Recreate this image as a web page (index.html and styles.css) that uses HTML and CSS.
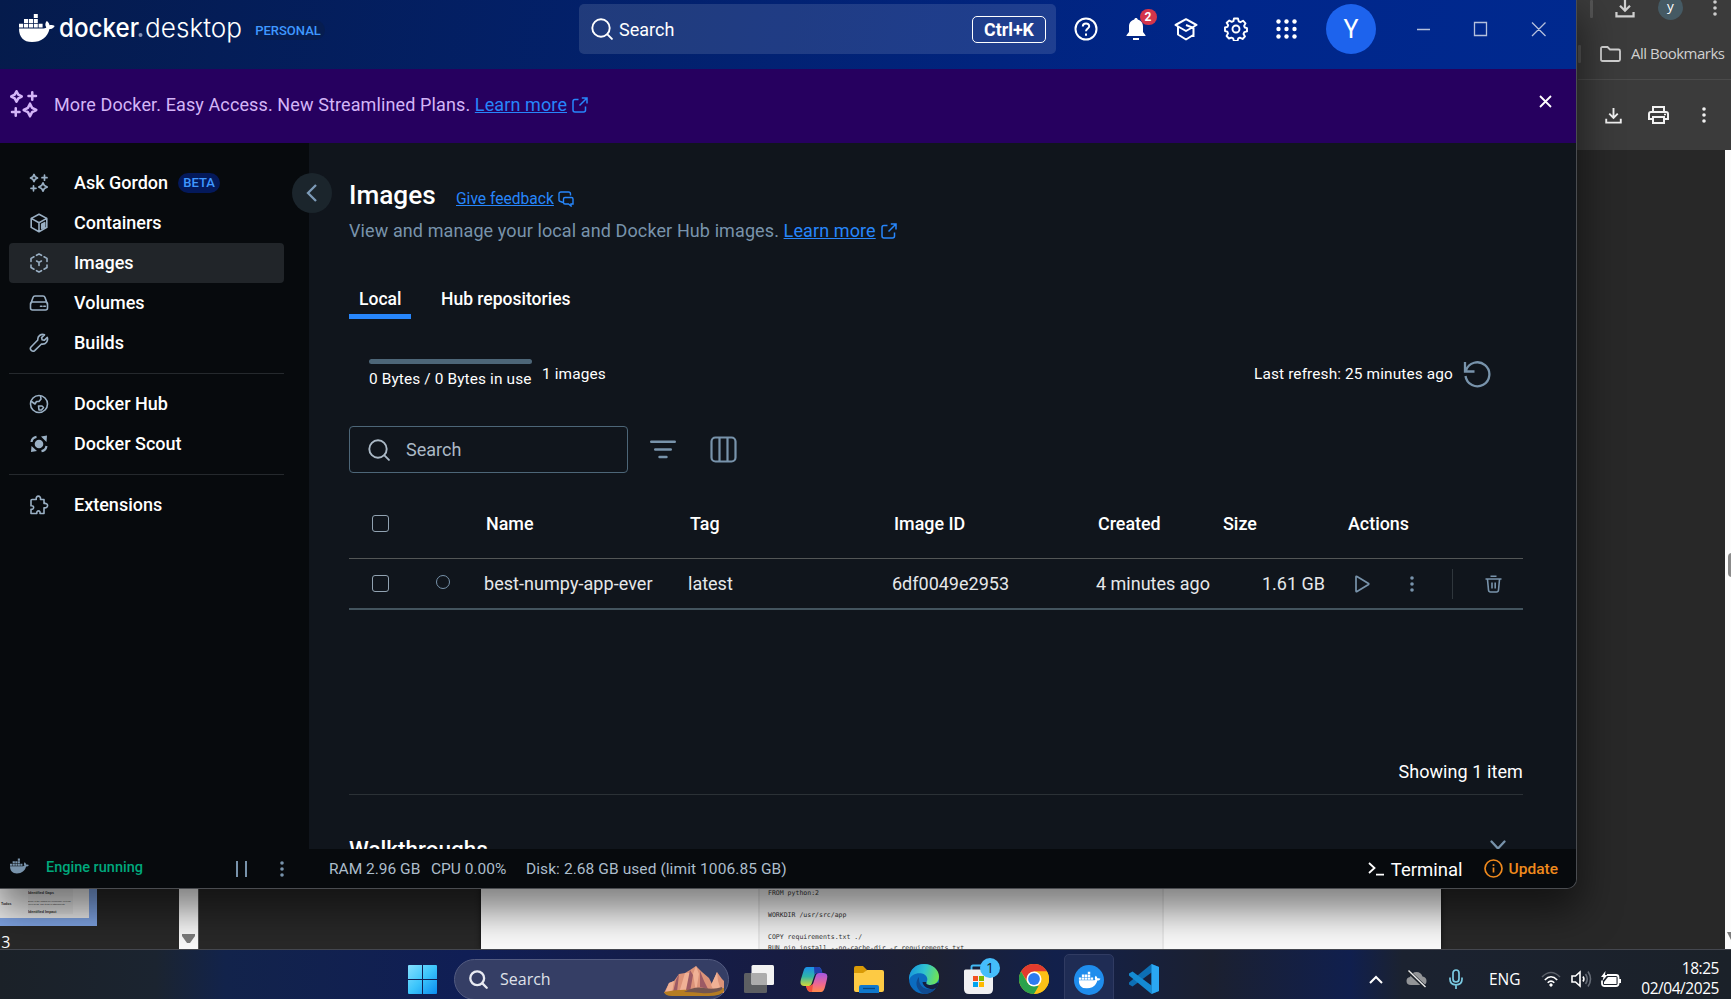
FILE: index.html
```html
<!DOCTYPE html>
<html lang="en">
<head>
<meta charset="utf-8">
<title>Docker Desktop</title>
<link rel="stylesheet" href="styles.css">
</head>
<body>
<svg class="defs" width="0" height="0">
  <symbol id="whale" viewBox="0 0 36 28"><path d="M0 9.8h4.2v3.8H0zM5 9.8h4.2v3.8H5zM10 9.8h4v3.8h-4zM14.8 9.8h4v3.8h-4zM19.6 9.8h4v3.8h-4zM5 5h4.2v4H5zM10 5h4v4h-4zM14.8 5h4v4h-4zM14.8 0h4v4h-4z"/><path d="M0 14.4h24.6c1.8 0 2.7-.5 2.6-1.2-1.3-2-1-4.400.5-6.300 1.700 1 2.700 2.700 2.800 4.300 1.900-.5 4-.2 5.200.7-.9 2.100-2.800 3.100-5.200 3.100C28.400 23.300 22.500 28 13 28 4.500 28 0 23 0 14.400z"/></symbol>
  <symbol id="sparkles" viewBox="0 0 20 20"><g fill="none" stroke="currentColor" stroke-width="1.7" stroke-linejoin="round" stroke-linecap="round"><path d="M5 1.500 6.200 3.800 8.500 5 6.200 6.200 5 8.500 3.800 6.200 1.500 5 3.800 3.800zM14 9.800l1.400 2.800 2.800 1.400-2.800 1.400-1.400 2.800-1.400-2.800L9.800 14l2.800-1.400zM15.500 2.200v5M13 4.700h5M4.500 12.800v5M2 15.300h5"/></g></symbol>
  <symbol id="search" viewBox="0 0 22 22"><g fill="none" stroke="currentColor" stroke-width="1.900" stroke-linecap="round"><circle cx="10" cy="10" r="8.700"/><path d="m16.400 16.400 4.500 4.500"/></g></symbol>
  <symbol id="external" viewBox="0 0 16 16"><g fill="none" stroke="currentColor" stroke-width="1.500"><path d="M6.500 2.500H3Q1 2.500 1 4.500V13q0 2 2 2h8.500q2 0 2-2V9.500M7.500 8.500 15 1M9.800 1H15v5.500"/></g></symbol>
  <symbol id="dots" viewBox="0 0 4 16"><circle cx="2" cy="2" r="1.800"/><circle cx="2" cy="8" r="1.800"/><circle cx="2" cy="14" r="1.800"/></symbol>
  <symbol id="download" viewBox="0 0 18 18"><path d="M9 1v10M4.500 7 9 11.500 13.500 7M1.300 12.500V16.500H16.700V12.500" fill="none" stroke="currentColor" stroke-width="2"/></symbol>
</svg>

<div class="desktop">
  <div class="browser">
    <div class="browser-top">
      <div class="chrome-row row-tools">
        <i class="vbar"></i>
        <svg class="dl" width="22" height="20"><use href="#download"/></svg>
        <span class="mini-avatar">y</span>
        <svg class="kebab" width="4" height="16"><use href="#dots"/></svg>
      </div>
      <div class="chrome-row row-bookmarks">
        <i class="vbar"></i>
        <svg width="21" height="16" viewBox="0 0 21 16" fill="none" stroke="currentColor" stroke-width="1.800"><path d="M1 2.500Q1 1 2.500 1H7.500L10 3.500h8.500q1.500 0 1.500 1.500v8.500q0 1.500-1.500 1.500h-16Q1 15 1 13.500z"/></svg>
        <span>All Bookmarks</span>
      </div>
      <div class="chrome-row row-pdf">
        <svg class="pdf-dl" width="17" height="17"><use href="#download"/></svg>
        <svg width="21" height="18" viewBox="0 0 21 18" fill="none" stroke="currentColor" stroke-width="2"><path d="M5 5V1h11v4M5 13H1V8q0-2 2-2h15q2 0 2 2v5h-4M5 11h11v6H5z"/><path d="M16 8.500h2" stroke-width="1.500"/></svg>
        <svg class="kebab" width="4" height="16"><use href="#dots"/></svg>
      </div>
    </div>
    <div class="viewer">
      <div class="thumbs">
        <div class="thumb"><div class="thumb-page">
          <b class="tl side">Todos</b>
          <div class="thumb-col"><span>and the rest</span><b>Identified Gaps</b><span>Some of the images we a summary of items<br>open areas, and items of attachments</span><b>Identified Impact</b></div>
        </div></div>
        <span class="thumb-no">13</span>
      </div>
      <div class="thumb-scroll"><svg width="13" height="9"><path d="M0 0h13v2L8 9H5L0 2z" fill="#7b7b7b"/></svg></div>
      <div class="gutter"></div>
      <div class="paper"><pre class="code">FROM python:2

WORKDIR /usr/src/app

COPY requirements.txt ./
RUN pip install --no-cache-dir -r requirements.txt</pre></div>
      <div class="grow"></div>
      <div class="page-scroll"><i class="thumb-grip"></i><svg width="6" height="8"><path d="M2 0h4v8z" fill="#7b7b7b"/></svg></div>
    </div>
  </div>

  <div class="window">
    <header class="titlebar">
      <svg class="logo" width="36" height="28" fill="#fff"><use href="#whale"/></svg>
      <svg class="wordmark" width="184" height="34" viewBox="0 0 184 34" fill="#fff">
        <text x="0" y="24" class="wm-bold" textLength="80" lengthAdjust="spacingAndGlyphs">docker</text>
        <circle cx="81.500" cy="22" r="2" fill="#8391b5"/>
        <text x="86" y="24" class="wm-light" textLength="97" lengthAdjust="spacingAndGlyphs">desktop</text>
      </svg>
      <span class="pill personal">PERSONAL</span>
      <div class="top-search"><svg width="22" height="22"><use href="#search"/></svg><span>Search</span><kbd>Ctrl+K</kbd></div>
      <div class="top-icons">
        <svg width="24" height="24" viewBox="0 0 24 24" fill="none" stroke="#fff" stroke-width="2"><circle cx="12" cy="12" r="10.500"/><path d="M8.800 9.500c0-4 6.400-4 6.400-.3 0 2.200-3.200 2.300-3.200 5"/><path d="M12 16.500v2.200"/></svg>
        <span class="bell"><svg width="22" height="24" viewBox="0 0 22 24" fill="#fff"><path d="M11 1c.9 0 1.500.5 1.700 1.500 3.300.8 5.300 3.500 5.300 7V15l2.500 3.200V19h-19v-.8L4 15V9.500c0-3.500 2-6.200 5.300-7C9.500 1.500 10.100 1 11 1zM8 21h6v2H8z"/></svg><b>2</b></span>
        <svg width="24" height="24" viewBox="0 0 24 24" fill="none" stroke="#fff" stroke-width="2" stroke-linejoin="round"><path d="M12 2.200 22.500 8 12 14 1.500 8zM4 9.500v8l8 5 8-5M12 8l7.500 3v9"/></svg>
        <svg width="24" height="24" viewBox="0 0 24 24" fill="none" stroke="#fff" stroke-width="1.900" stroke-linejoin="round"><circle cx="12" cy="12" r="3.500"/><path d="M10 1.500h4l.7 2.900 1.700.8 2.600-1.500 2.500 2.600-1.400 2.600.7 1.600 2.200.6v3.300l-2.700.8-.8 1.800 1.500 2.400-2.400 2.600-2.700-1.400-1.600.7-.8 2.700h-3.600l-.8-2.700-1.800-.7L5 21.500 2.600 19l1.400-2.600-.7-1.700L1 14.100v-3.600l2.500-.7.7-1.600L2.700 5.800 5.300 3.500l2.400 1.400 1.700-.7z"/></svg>
        <svg width="24" height="24" viewBox="0 0 24 24" fill="#fff"><g id="d3"><circle cx="4.500" cy="4.500" r="2.200"/><circle cx="12.500" cy="4.500" r="2.200"/><circle cx="20.500" cy="4.500" r="2.200"/></g><use href="#d3" y="7.500"/><use href="#d3" y="15"/></svg>
      </div>
      <span class="avatar">Y</span>
      <svg class="win-controls" width="130" height="16" viewBox="0 0 130 16" fill="none" stroke="#b5c0dc" stroke-width="1.300"><path d="M0 8.500h13M57.500 1.500h12v13h-12zM115 1.500l13.500 13.500M128.500 1.500 115 15"/></svg>
    </header>

    <div class="banner">
      <svg class="b-spark" width="30" height="30"><use href="#sparkles"/></svg>
      <p>More Docker. Easy Access. New Streamlined Plans. <a>Learn more</a></p>
      <svg class="b-ext" width="16" height="16"><use href="#external"/></svg>
      <svg class="b-close" width="13" height="13" viewBox="0 0 13 13"><path d="M1 1l11 11M12 1 1 12" stroke="#fff" stroke-width="1.800"/></svg>
    </div>

    <div class="body">
      <nav class="sidebar">
        <a class="item"><svg width="20" height="20"><use href="#sparkles"/></svg><span>Ask Gordon</span><span class="pill beta">BETA</span></a>
        <a class="item"><svg width="20" height="20" viewBox="0 0 20 20" class="ln"><path d="M10 1.200l7.800 4.200v9L10 18.700l-7.800-4.300v-9zM2.200 5.400 10 9.700l7.800-4.300M10 9.700v9M12.700 15.300v-4l3-1.600v4zM14.200 11v3.500"/></svg><span>Containers</span></a>
        <a class="item active"><svg width="20" height="20" viewBox="0 0 20 20" class="ln" stroke-width="1.900"><path d="M7.500 2.300 10 1l2.500 1.300M15 3.800l3 1.600v3M18 12v2.500l-3 1.700M12.500 17.700 10 19l-2.500-1.300M5 16.200l-3-1.700V12M2 8.400v-3l3-1.600M7.600 8 10 9.400 12.400 8M10 9.400V12.500"/></svg><span>Images</span></a>
        <a class="item"><svg width="20" height="20" viewBox="0 0 20 20" class="ln"><path d="M1.500 11.500 4 4.500Q4.500 3 6 3h8q1.500 0 2 1.500l2.500 7M3.500 9h13q2 0 2 2v4q0 2-2 2h-13q-2 0-2-2v-4q0-2 2-2z"/><path d="M11.500 13.300h1.500M14.800 13.300h1.500"/></svg><span>Volumes</span></a>
        <a class="item"><svg width="20" height="20" viewBox="0 0 20 20" class="ln"><path d="M15.500 1.800c-3-1.300-7.200.8-6.700 5.200L2 14c-2 2.300 1.500 5.500 3.700 3.600L12.500 11c4.500.7 6.900-3.400 5.800-6.600l-3.100 2.900-2.100-.6-.5-2.100z"/></svg><span>Builds</span></a>
        <hr>
        <a class="item"><svg width="20" height="20" viewBox="0 0 20 20" class="ln"><circle cx="10" cy="10" r="8.500"/><path d="M2.500 7.500 6 10l1.500-2.500H10L12 5l-.5-3.300M9.500 12h3.500l1.500 1.500-2 2.500H10z"/></svg><span>Docker Hub</span></a>
        <a class="item"><svg width="20" height="20" viewBox="0 0 20 20"><circle cx="10" cy="10" r="4.300" fill="currentColor"/><path d="M2.500 8Q3 3.500 7.500 2.800M17.500 12q-.8 4.500-5 5.200" fill="none" stroke="currentColor" stroke-width="2.200"/><path d="M12 2.500 18 1.500 17.500 8zM2 18l.5-6 5.500 5z" fill="currentColor"/></svg><span>Docker Scout</span></a>
        <hr>
        <a class="item"><svg width="20" height="20" viewBox="0 0 20 20" class="ln"><path d="M7.300 4.500c-1-4.500 5-4.500 4.200 0H15v4c4.800-.8 4.800 5 0 4.300V18.500h-4c.7-3.500-3.700-3.500-3.200 0H2v-4.300c3.500.6 3.500-4 0-3.400V5.500q0-1 1-1z"/></svg><span>Extensions</span></a>
      </nav>
      <span class="collapse"><svg width="12" height="18" viewBox="0 0 12 18"><path d="M10 1 2 9l8 8" fill="none" stroke="#7d9bb8" stroke-width="2.300"/></svg></span>

      <main class="main">
        <div class="title-row"><h1>Images</h1><a class="feedback">Give feedback</a><svg width="16" height="16" viewBox="0 0 16 16" fill="none" stroke="#2786fb" stroke-width="1.400"><path d="M5 11.500 2.500 10.500Q1 10.500 1 9V3q0-2 2-2h7.500q2 0 2 2v1.500M7 6.500h6.500q1.500 0 1.500 1.500v5H13v2l-2.500-2H7q-1.500 0-1.500-1.500V8Q5.500 6.500 7 6.500z"/></svg></div>
        <div class="sub-row"><p>View and manage your local and Docker Hub images. <a>Learn more</a></p><svg width="16" height="16"><use href="#external"/></svg></div>
        <div class="tabs"><span class="tab on">Local</span><span class="tab">Hub repositories</span></div>
        <div class="usage">
          <div class="meter"><i></i><span>0 Bytes / 0 Bytes in use</span></div>
          <span class="count">1 images</span>
          <span class="refresh">Last refresh: 25 minutes ago</span>
          <svg width="28" height="28" viewBox="0 0 28 28" fill="none" stroke="#7893ab" stroke-width="2.300"><path d="M2 2v9.500h9.500M3 10.500A12 12 0 1 1 2.500 16"/></svg>
        </div>
        <div class="filters">
          <div class="field"><svg width="22" height="22"><use href="#search"/></svg><span>Search</span></div>
          <svg class="f1" width="26" height="19" viewBox="0 0 26 19"><path d="M1.200 1.800h23.600M5.200 9.500h15.600M9.500 17h7" stroke="#7893ab" stroke-width="2.400" stroke-linecap="round"/></svg>
          <svg width="27" height="27" viewBox="0 0 27 27" fill="none" stroke="#7893ab" stroke-width="2.200"><rect x="1.500" y="1.500" width="24" height="24" rx="4"/><path d="M9.500 2v23M17.500 2v23"/></svg>
        </div>
        <div class="table">
          <div class="tr th"><i class="box"></i><i></i><span>Name</span><span>Tag</span><span>Image ID</span><span>Created</span><span>Size</span><span>Actions</span></div>
          <div class="tr td"><i class="box"></i><i class="ring"></i><span class="name">best-numpy-app-ever</span><span>latest</span><span>6df0049e2953</span><span>4 minutes ago</span><span class="size">1.61 GB</span>
            <div class="actions">
              <svg width="15" height="18" viewBox="0 0 15 18"><path d="M1 2v14q0 1 1 .5L13.500 9.500q.6-.5 0-1L2 1.500Q1 1 1 2z" fill="none" stroke="#7893ab" stroke-width="1.700"/></svg>
              <svg class="a-dots" width="4" height="16" fill="#7893ab"><use href="#dots"/></svg>
              <i class="a-sep"></i>
              <svg width="17" height="18" viewBox="0 0 17 18" fill="none" stroke="#7893ab" stroke-width="1.600"><path d="M.5 4h16M5.500 1.200h6M2.500 4.500l1 10.500q.2 2 2 2h6q1.800 0 2-2l1-10.500M7 7.500v6M10.200 7.500v6"/></svg>
            </div>
          </div>
        </div>
        <div class="showing">Showing 1 item</div>
        <div class="walk"><h2>Walkthroughs</h2><svg width="16" height="11" viewBox="0 0 16 11"><path d="M1.500 1.500 8 8.500l6.500-7" fill="none" stroke="#7893ab" stroke-width="2.300" stroke-linecap="round"/></svg></div>
      </main>
    </div>

    <footer class="status">
      <svg class="s-whale" width="19" height="16" fill="#7893ab"><use href="#whale"/></svg>
      <span class="engine">Engine running</span>
      <i class="pause"></i>
      <svg class="s-dots" width="4" height="16" fill="#7893ab"><use href="#dots"/></svg>
      <span class="stat ram">RAM 2.96 GB</span><span class="stat cpu">CPU 0.00%</span><span class="stat">Disk: 2.68 GB used (limit 1006.85 GB)</span>
      <svg class="s-term" width="16" height="14" viewBox="0 0 16 14"><path d="M1 1l5.500 5L1 11M8 12.700h8" fill="none" stroke="#fff" stroke-width="1.800"/></svg>
      <span class="terminal">Terminal</span>
      <svg class="s-info" width="19" height="19" viewBox="0 0 19 19" fill="none" stroke="#f08a1d" stroke-width="1.700"><circle cx="9.500" cy="9.500" r="8.500"/><path d="M9.500 8.500v5M9.500 5.300v1.700"/></svg>
      <span class="update">Update</span>
    </footer>
  </div>

  <div class="taskbar">
    <svg class="start" width="29" height="29" viewBox="0 0 29 29"><defs><linearGradient id="win" gradientUnits="userSpaceOnUse" x1="0" y1="0" x2="29" y2="29"><stop offset="0" stop-color="#86e0ff"/><stop offset=".5" stop-color="#3cc5fb"/><stop offset="1" stop-color="#0a8cf0"/></linearGradient></defs><path d="M0 1q0-1 1-1h13v14H0zM15 0h13q1 0 1 1v13H15zM0 15h14v14H1q-1 0-1-1zM15 15h14v13q0 1-1 1H15z" fill="url(#win)"/></svg>
    <div class="task-search"><svg width="19" height="19" viewBox="0 0 22 22"><g fill="none" stroke="#e8eaf2" stroke-width="2.700" stroke-linecap="round"><circle cx="9.500" cy="9.500" r="8"/><path d="m15.500 15.500 5 5"/></g></svg><span>Search</span>
      <svg class="hills" width="60" height="30" viewBox="0 0 60 30"><path d="M0 27 5 17l5-2 5-7 6-1 5-3 6-4 6 6 7 6 3 6 5-12 5 7 5 5 2 9z" fill="#dc9379"/><path d="M5 17l5-2-2 12H1zM21 7l5 0-4 20h-7zM32 0l3 8-3 18-3-18zM53 6l1 9 3 9-8-1-2-4z" fill="#f0b195"/><path d="M15 8l-2 18-4 0 3-12zM36 5l4 10 4 8-8-2zM26 4l3 5-3 17-4-2z" fill="#9c5a64"/><path d="M0 26q15-3 27-2t33-2v3q-2 5-16 5H8Q1 30 0 26z" fill="#b57d22"/><path d="M20 26q10-6 20-4t18-1q2 3-6 5t-15 1-17-1z" fill="#73554f"/></svg></div>
    <svg class="app" width="30" height="28" viewBox="0 0 30 28"><rect y="8" width="23" height="20" rx="1.500" fill="#5d5f62"/><rect x="7.500" y="0" width="22.500" height="20" rx="1.500" fill="#f2f2f2"/><path d="M7.500 8H21.500q1.500 0 1.500 1.500V20H9q-1.500 0-1.500-1.500z" fill="#acacac"/></svg>
    <svg class="app" width="30" height="28" viewBox="0 0 30 28"><defs><linearGradient id="cp1" x1="0" y1="0" x2="0" y2="1"><stop offset="0" stop-color="#1b8eea"/><stop offset=".5" stop-color="#2fb5a8"/><stop offset="1" stop-color="#d5d737"/></linearGradient><linearGradient id="cp2" x1="0" y1="0" x2="0" y2="1"><stop offset="0" stop-color="#a257e4"/><stop offset=".6" stop-color="#f0688f"/><stop offset="1" stop-color="#ff8a4a"/></linearGradient></defs><path d="M8 2h11q2.500 0 3.500 3l.8 3H18q-2 0-2.800 3L12.500 19q-.8 2-2.500 2H5Q0 21 2 14L4.500 6Q5.500 2 8 2z" fill="url(#cp1)"/><path d="M15 2h4q2.500 0 3.500 3l.8 3H18q-2 0-2.500 2z" fill="#213fae"/><path d="M22 27H12q-3 0-4-3l-1-3h4q2.500 0 3.300-3L17 10q.7-2 3-2h4.500q5 0 3.500 6l-2 8q-1.200 5-4 5z" fill="url(#cp2)"/><path d="M7 21h4l3-2-1 8q-4 0-5-3z" fill="#f2503c"/></svg>
    <svg class="app" width="30" height="28" viewBox="0 0 30 28"><path d="M0 3q0-2 2-2h7l4 4-4 5H0z" fill="#d99a06"/><path d="M0 8h9l4-3h15q2 0 2 2v18q0 2-2 2H2q-2 0-2-2z" fill="#fdca44"/><path d="M5 28v-6q0-2 2-2h16q2 0 2 2v6z" fill="#0f78cd"/><path d="M9 23.500h12" stroke="#07477f" stroke-width="1.300"/></svg>
    <svg class="app" width="30" height="30" viewBox="0 0 30 30"><defs><linearGradient id="ed" x1="0" y1=".3" x2="1" y2=".5"><stop offset="0" stop-color="#1695dc"/><stop offset=".5" stop-color="#30c3d0"/><stop offset="1" stop-color="#70e352"/></linearGradient></defs><circle cx="15" cy="15" r="15" fill="#0b6cc0"/><path d="M0 14C1 5 7 0 15 0c9 0 15 6 15 12.500C30 18 26 21 21.500 21c-4 0-5-1.500-4-3 2-2.500.5-7.500-4.500-8.500C7 8.500 2 11 0 16z" fill="url(#ed)"/><path d="M10 15c0 8 7 12 16.500 9.500C24 28 20 30 15 30 10 28 4 20 10 13z" fill="#104b91"/><path d="M17.500 18c-1 2 .8 3 4 3 2.500 0 5-.7 7-2.400l1.500.4-2.500 5-4 1.200C18 25 14 22 13.500 18z" fill="#151f40"/></svg>
    <span class="app store"><svg width="30" height="30" viewBox="0 0 30 30"><path d="M7.500 6V3q0-1.500 1.500-1.500h12" fill="none" stroke="#42b9f5" stroke-width="1.900"/><path d="M0 7q0-1.500 1.500-1.500h26Q29 5.500 29 7v18q0 5-5 5H5q-5 0-5-5z" fill="#f0f0f2"/><path d="M9 12h5v5H9z" fill="#f25022"/><path d="M15 12h5v5h-5z" fill="#7fba00"/><path d="M9 18h5v5H9z" fill="#00a4ef"/><path d="M15 18h5v5h-5z" fill="#ffb900"/></svg><b>1</b></span>
    <svg class="app" width="30" height="30" viewBox="0 0 30 30"><circle cx="15" cy="15" r="15" fill="#fbc116"/><path d="M2 7.500A15 15 0 0 1 28 7.500H15L9 18.500z" fill="#e33b2e"/><path d="M2 7.500 8.500 18.700Q11 22 15 22h6.500L15 30A15 15 0 0 1 2 7.500z" fill="#2ba24c"/><path d="M21.500 18.700 15 30A15 15 0 0 0 28 7.500H15z" fill="#fbc116"/><circle cx="15" cy="15" r="7.500" fill="#fff"/><circle cx="15" cy="15" r="5.900" fill="#2c7bf0"/></svg>
    <span class="app running"><svg width="30" height="30" viewBox="0 0 30 30"><circle cx="15" cy="15" r="15" fill="#1f8ded"/><use href="#whale" x="4.500" y="6.500" width="22.500" height="17" fill="#fff"/></svg></span>
    <svg class="app" width="30" height="30" viewBox="0 0 30 30"><path d="M22.500 0 30 3v24l-7.500 3V8.500L3.500 22.500 0 20.500v-2z" fill="#0d6fb4"/><path d="M0 9.500 3.500 7.500 22.500 21.500V30L0 11.500z" fill="#148bd3"/><path d="M22.500 0 30 3v24l-7.500 3z" fill="#2aa7f2"/></svg>
    <div class="tray">
      <svg width="14" height="9" viewBox="0 0 14 9"><path d="M1 8l6-6 6 6" fill="none" stroke="#fff" stroke-width="2"/></svg>
      <svg class="cloud" width="21" height="18" viewBox="0 0 21 18"><path d="M5 15q-4.500 0-4.500-4Q.5 7.500 4 7q2-5 6.500-5t6 4.500q4 .5 4 4.500 0 4-4 4z" fill="#929497"/><path d="M2 1l17 16" stroke="#1b2028" stroke-width="3.500"/><path d="M2.500.5l17 16.500" stroke="#eee" stroke-width="1.400"/></svg>
      <svg class="mic" width="14" height="20" viewBox="0 0 14 20" fill="none" stroke="#7bcbe2" stroke-width="1.700"><rect x="4" y="1" width="6" height="12" rx="3"/><path d="M1 8.500v1.800q0 5.500 6 5.500t6-5.500V8.500M7 16v4"/></svg>
      <span class="lang">ENG</span>
      <svg class="wifi" width="20" height="16" viewBox="0 0 20 16" fill="none" stroke="#fff" stroke-width="1.600"><path d="M1 6q9-9 18 0" stroke="#5b6069"/><path d="M3.800 9q6.200-6.400 12.400 0M6.700 11.800q3.300-3.300 6.600 0"/><circle cx="10" cy="14" r="1.200" fill="#fff" stroke-width="1"/></svg>
      <svg class="vol" width="21" height="18" viewBox="0 0 21 18" fill="none" stroke="#fff" stroke-width="1.600"><path d="M1 6v6h3.500L9 16V2L4.500 6zM12 6.500q1.800 2.500 0 5"/><path d="M14.500 4q3.500 5 0 10M17 1.500q5 7.500 0 15" stroke="#666c76"/></svg>
      <svg class="bat" width="20" height="17" viewBox="0 0 20 17"><path d="M6 4h9q2.500 0 2.500 2.500v6Q17.500 15 15 15H3.500Q1 15 1 12.500v-3" fill="none" stroke="#fff" stroke-width="1.800"/><path d="M7 6h8.500v7H3v-2zM18 8h2v4h-2zM4.500 0 0 6h2.500L1.500 10 6.500 4H4z" fill="#fff"/></svg>
      <div class="clock"><span>18:25</span><span>02/04/2025</span></div>
    </div>
  </div>
</div>
</body>
</html>
```
FILE: styles.css
```css
* { box-sizing: border-box; margin: 0; padding: 0; }
body { width: 1731px; height: 999px; overflow: hidden; font-family: Roboto, sans-serif; font-size: 18px; color: #fff; background: #282828; }
svg { flex: none; display: block; }
a { color: #2786fb; }
.defs { position: absolute; }
.desktop { position: relative; width: 1731px; height: 999px; overflow: hidden; display: flex; flex-direction: column; }

/* Browser behind the window */
.browser { height: 949px; flex: none; display: flex; flex-direction: column; background: #282828; }
.browser-top { height: 150px; background: #3b3b3b; color: #d0d0d0; padding-left: 1578px; font-family: "Open Sans", sans-serif; }
.chrome-row { display: flex; align-items: center; }
.row-tools { height: 30px; align-items: flex-start; padding-left: 12px; }
.vbar { width: 3px; height: 18px; background: #555; border-radius: 1px; flex: none; }
.dl { margin: -2px 0 0 21px; }
.mini-avatar { width: 25px; height: 25px; margin: -5px 0 0 22px; border-radius: 50%; background: #455a64; color: #fff; font-size: 13.500px; line-height: 22px; text-align: center; }
.row-tools .kebab { margin: 0 0 0 30px; fill: #ccc; }
.row-bookmarks { height: 50px; padding: 0 0 2px; border-bottom: 1px solid #4b4b4b; font-size: 15px; }
.row-bookmarks svg { margin: 0 10px 0 19px; }
.row-bookmarks span { white-space: nowrap; letter-spacing: -.5px; margin-top: -1px; }
.row-pdf { height: 70px; padding-left: 27px; color: #f1f1f1; }
.row-pdf svg + svg { margin-left: 26px; }
.row-pdf svg.kebab { margin-left: 33px; fill: #f1f1f1; }
.viewer { height: 799px; display: flex; align-items: stretch; }
.thumbs { width: 179px; padding-top: 640px; background: #282828; overflow: hidden; }
.thumb { width: 97px; height: 136px; background: #7fa4e4; padding: 0 8px 8px 0; }
.thumb-page { height: 128px; background: #eee; display: flex; align-items: flex-end; padding-bottom: 4px; font: 3.600px/4px "Liberation Sans", sans-serif; color: #333; }
.tl.side { width: 28px; padding: 0 0 8px 1px; }
.thumb-col { display: flex; flex-direction: column; gap: 2px; width: 45px; height: 30px; justify-content: space-between; background: #e5e5e5; white-space: nowrap; overflow: hidden; }
.thumb-col span { font-size: 2.200px; line-height: 3px; }
.thumb-no { display: block; font: 16px/20px "Open Sans", sans-serif; margin: 6px 0 0 -8px; }
.thumb-scroll { width: 20px; background: #fafafa; display: flex; justify-content: center; align-items: flex-end; padding-bottom: 6px; border-right: 1px solid #555; }
.gutter { width: 282px; }
.paper { width: 960px; padding: 640px 277px 0; background: #fafafa; overflow: hidden; box-shadow: 0 0 5px #111; }
.code { height: 159px; padding: 98px 0 0 8px; background: #f4f4f4; border: solid #e8e8e8; border-width: 0 2px; color: #333; font: 6.530px/11px "DejaVu Sans Mono", "Liberation Mono", monospace; overflow: hidden; }
.grow { flex: 1; }
.page-scroll { width: 6px; background: #fcfcfc; display: flex; flex-direction: column; justify-content: space-between; padding: 403px 0 9px; }
.thumb-grip { width: 4px; height: 24px; margin-left: 3px; background: #8b8b8b; border-radius: 4px 0 0 4px; }

/* Docker window */
.window { position: absolute; left: 0; top: 0; width: 1577px; height: 889px; display: flex; flex-direction: column; border: solid #4a4c50; border-width: 0 1px 1px 0; border-radius: 0 0 10px 0; overflow: hidden; background: #10151c; box-shadow: 0 18px 38px 4px rgba(0,0,0,.5); }
.titlebar { height: 69px; flex: none; display: flex; align-items: center; padding: 0 0 11px 19px; background: linear-gradient(100deg, #051b4c, #00268a 78%, #00298f); }
.logo { margin-top: -2px; }
.wordmark { margin: 2px 0 0 4px; overflow: visible; }
.wm-bold { font: 500 26px Inter, sans-serif; }
.wm-light { font: 300 26px Inter, sans-serif; }
.pill { display: flex; align-items: center; justify-content: center; height: 20px; border-radius: 10px; font-size: 13px; font-weight: 500; color: #3f98ff; }
.personal { width: 74px; margin: 2px 0 0 8px; background: #061d50; }
.top-search { width: 477px; height: 50px; margin-left: 254px; padding: 0 10px 0 12px; display: flex; align-items: center; border-radius: 5px; background: rgba(255,255,255,.12); }
.top-search span { margin-left: 6px; flex: 1; }
kbd { width: 74px; height: 27px; border: 1.500px solid #fff; border-radius: 5px; font: bold 17.800px/25px Roboto, sans-serif; text-align: center; }
.top-icons { display: flex; align-items: center; gap: 26px; margin-left: 17.500px; }
.bell { position: relative; width: 24px; padding-left: 1px; }
.bell b { position: absolute; left: 16px; top: -8px; width: 17px; height: 16px; border-radius: 8px; background: #d4354b; font-size: 12px; line-height: 16px; text-align: center; }
.avatar { width: 50px; height: 50px; margin-left: 28.500px; border-radius: 50%; background: #1d63ed; font-size: 25px; line-height: 51px; text-align: center; }
.win-controls { margin-left: 41px; }
.banner { height: 74px; flex: none; display: flex; align-items: center; padding: 0 24px 4px 9px; background: #26005f; color: #d4b5f7; letter-spacing: .115px; }
.banner p { margin-left: 15px; }
.b-spark { margin-top: -1px; }
.b-ext { margin: 2px auto 0 5px; color: #2786fb; }
.b-close { margin-top: -5px; }
.body { position: relative; height: 706px; flex: none; display: flex; }
.sidebar { width: 309px; padding: 20px 25px 0 9px; background: #070a0d; flex: none; color: #8ea3b8; }
.item { display: flex; align-items: center; height: 40px; padding-left: 20px; border-radius: 4px; color: #fff; font-weight: 500; font-size: 18px; }
.item > span:not(.pill) { margin-top: -2px; }
.item svg { margin-right: 25px; color: #9ab0c4; }
.item.active { background: #212529; }
.ln { fill: none; stroke: currentColor; stroke-width: 1.600; stroke-linejoin: round; stroke-linecap: round; }
.sidebar hr { border: 0; height: 1px; background: #25292d; margin: 10px 0; }
.beta { width: 42px; margin: -1px 0 0 10px; background: #04195a; }
.collapse { position: absolute; left: 292px; top: 30px; width: 40px; height: 40px; border-radius: 50%; background: #1b252c; display: flex; align-items: center; justify-content: center; }
.main { width: 1267px; height: 706px; padding: 0 53px 0 40px; overflow: hidden; background: #10151c; }
.title-row { display: flex; align-items: center; height: 38px; margin-top: 33px; }
h1 { font-size: 26.200px; font-weight: 500; width: 107px; }
.feedback { font-size: 15.600px; margin-top: 7px; }
.title-row svg { margin: 7px 0 0 4px; }
.sub-row { display: flex; align-items: center; height: 32px; color: #7893ab; letter-spacing: .105px; }
.sub-row svg { margin: 2px 0 0 5px; color: #2786fb; }
.sub-row a, .banner a { text-decoration: underline; }
.feedback { text-decoration: underline; }
.tabs { display: flex; height: 36px; margin-top: 37px; font-size: 17.500px; font-weight: 500; gap: 20px; }
.tab { padding: 6px 10px 0; line-height: 20px; }
.tab.on { width: 62px; border-bottom: 5px solid #2786fb; }
.usage { display: flex; height: 46px; margin-top: 30px; padding: 10px 32px 0 20px; font-size: 15.400px; letter-spacing: .13px; }
.meter { width: 163px; }
.meter i { display: block; height: 5px; border-radius: 3px; background: #4d6678; margin-bottom: 5px; }
.meter span, .count, .refresh { line-height: 20px; white-space: nowrap; }
.count { margin: 5px auto 0 10px; }
.refresh { margin: 5px 10px 0 0; }
.usage svg { margin-top: 1px; }
.filters { display: flex; align-items: center; height: 47px; margin-top: 31px; }
.field { width: 279px; height: 47px; display: flex; align-items: center; padding-left: 18px; border: 1px solid #4d6678; border-radius: 4px; color: #abb9c6; }
.field span { margin-left: 16px; }
.f1 { margin: 0 34px 0 22px; }
.table { margin-top: 17px; }
.tr { display: grid; grid-template-columns: 83px 52px 204px 204px 204px 125px 125px 1fr; align-items: center; }
.th { height: 69px; padding: 0 0 1px; border-bottom: 1px solid #535656; font-weight: 500; font-size: 17.900px; }
.th span { padding-left: 2px; }
.td { height: 51px; border-bottom: 2px solid #43545e; color: #e6e8ea; }
.td .name { letter-spacing: .05px; }
.box { width: 17px; height: 17px; margin-left: 22.500px; border: 1.600px solid #91a2b1; border-radius: 3px; }
.ring { width: 14px; height: 14px; margin: -3px 0 0 3.500px; border: 1.400px solid #7893ab; border-radius: 50%; }
.td .size { text-align: right; padding-right: 21px; }
.actions { display: flex; align-items: center; padding-left: 9px; }
.a-dots { margin-left: 40px; }
.a-sep { width: 1px; height: 30px; background: #2f363c; margin: 0 32px 0 38px; }
.showing { height: 185px; padding-top: 151px; text-align: right; line-height: 21px; letter-spacing: .08px; border-bottom: 1px solid #2b3136; }
.walk { display: flex; justify-content: space-between; padding: 40px 17px 0 0; }
.walk h2 { font-size: 22.500px; font-weight: 500; line-height: 28px; height: 15px; }
.walk svg { margin-top: 5px; }
.status { height: 39px; flex: none; display: flex; align-items: center; padding: 0 18px 0 10px; background: #070a0d; font-size: 15.500px; color: #adbecc; white-space: nowrap; }
.s-whale { margin-top: -6px; }
.engine { width: 190px; margin: -2px 0 0 17px; color: #00a87c; font-weight: 500; font-size: 14.500px; }
.pause { width: 11px; height: 16px; border: solid #7893ab; border-width: 0 2px; }
.s-dots { margin: 0 45px 0 33px; }
.ram { width: 102px; }
.cpu { width: 95px; }
.stat:nth-of-type(4) { letter-spacing: .08px; }
.s-term { margin: 0 7px 0 auto; }
.terminal { font-size: 18.500px; color: #fff; margin-top: 3px; }
.s-info { margin: 0 6px 0 21px; }
.update { color: #f08a1d; font-weight: 500; }

/* Windows taskbar */
.taskbar { position: relative; height: 50px; flex: none; display: flex; align-items: center; padding: 9px 12px 0 408px; border-top: 1px solid #44474f; background: linear-gradient(90deg, #1b2128, #1b2430 9%, #12234b 13%, #101e55 27%, #171c42 45%, #1c2032 54%, #12204b 61%, #1b2030 70%, #101f4e 78%, #1b2230 81%, #1b2129); font-family: "Open Sans", "Noto Sans", sans-serif; }
.task-search { width: 275px; height: 41px; margin-left: 17px; padding: 0 4px 0 14px; display: flex; align-items: center; border: 1px solid #535b80; border-radius: 21px; background: #353e65; font-size: 16px; color: #dfe1e9; }
.task-search span { margin-left: 12px; }
.hills { margin: 3px 0 0 auto; }
.app { margin-left: 25px; }
.task-search + .app { margin-left: 15px; }
.store { position: relative; }
.store b { position: absolute; left: 16px; top: -6px; width: 20px; height: 20px; border-radius: 50%; background: #45bdfb; color: #10202b; font-size: 14px; line-height: 20px; font-weight: 400; text-align: center; }
.running { width: 50px; height: 50px; margin: 0 -10px 0 15px; padding: 10px 9px; border: 1px solid #303b62; border-radius: 5px; background: #1f2c54; }
.tray { display: flex; align-items: center; margin-left: auto; font-size: 15.500px; }
.cloud { margin-left: 23px; }
.mic { margin-left: 22px; }
.lang { margin: -1px 0 0 26px; width: 52px; }
.vol { margin-left: 10px; }
.bat { margin-left: 9px; }
.clock { width: 98px; display: flex; flex-direction: column; align-items: flex-end; line-height: 20px; letter-spacing: -.45px; margin: -2px 0 0; }
```
